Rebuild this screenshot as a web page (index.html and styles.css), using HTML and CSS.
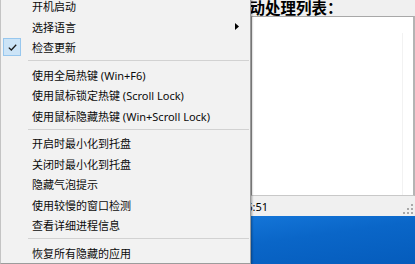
FILE: index.html
```html
<!DOCTYPE html>
<html lang="zh-CN">
<head>
<meta charset="utf-8">
<link rel="stylesheet" href="styles.css">
</head>
<body>
<div class="screen">
  <div class="window">
    <div class="win-head"><span class="label">自动处理列表：</span></div>
    <div class="listbox"><div class="col-line"></div></div>
    <div class="status">
      <span class="time">16:51</span>
      <svg class="grip" width="10" height="10" viewBox="0 0 10 10">
        <rect x="8" y="0" width="2" height="2" fill="#a8a8a8"/>
        <rect x="4" y="4" width="2" height="2" fill="#a8a8a8"/>
        <rect x="8" y="4" width="2" height="2" fill="#a8a8a8"/>
        <rect x="0" y="8" width="2" height="2" fill="#a8a8a8"/>
        <rect x="4" y="8" width="2" height="2" fill="#a8a8a8"/>
        <rect x="8" y="8" width="2" height="2" fill="#a8a8a8"/>
      </svg>
    </div>
  </div>
  <div class="desktop"></div>

  <div class="menu">
    <div class="item"><span class="gutter"></span><span class="text">开机启动</span></div>
    <div class="item"><span class="gutter"></span><span class="text">选择语言</span>
      <svg class="arrow" width="4" height="7" viewBox="0 0 4 7"><path d="M0 0 L4 3.5 L0 7 Z" fill="#000"/></svg>
    </div>
    <div class="item"><span class="gutter checked">
      <svg width="9" height="7" viewBox="0 0 9 7"><path d="M0.8 3.6 L3.3 6 L8.2 0.8" fill="none" stroke="#1a1a1a" stroke-width="1.3"/></svg>
    </span><span class="text">检查更新</span></div>
    <div class="sep"></div>
    <div class="item"><span class="gutter"></span><span class="text">使用全局热键 (Win+F6)</span></div>
    <div class="item"><span class="gutter"></span><span class="text">使用鼠标锁定热键 (Scroll Lock)</span></div>
    <div class="item"><span class="gutter"></span><span class="text">使用鼠标隐藏热键 (Win+Scroll Lock)</span></div>
    <div class="sep"></div>
    <div class="item"><span class="gutter"></span><span class="text">开启时最小化到托盘</span></div>
    <div class="item"><span class="gutter"></span><span class="text">关闭时最小化到托盘</span></div>
    <div class="item"><span class="gutter"></span><span class="text">隐藏气泡提示</span></div>
    <div class="item"><span class="gutter"></span><span class="text">使用较慢的窗口检测</span></div>
    <div class="item"><span class="gutter"></span><span class="text">查看详细进程信息</span></div>
    <div class="sep"></div>
    <div class="item"><span class="gutter"></span><span class="text">恢复所有隐藏的应用</span></div>
  </div>
</div>
</body>
</html>
```
FILE: styles.css
```css
html, body {
  margin: 0;
  padding: 0;
}
body {
  width: 415px;
  height: 264px;
  overflow: hidden;
  font-family: "Noto Sans", "Noto Sans CJK SC", sans-serif;
}
.screen {
  position: relative;
  width: 415px;
  height: 264px;
  overflow: hidden;
  display: flex;
  flex-direction: column;
}
.window {
  height: 216px;
  background: #f0f0f0;
  display: flex;
  flex-direction: column;
  padding-left: 250px;
  box-sizing: border-box;
}
.win-head {
  height: 16px;
}
.label {
  display: block;
  margin-left: -16px;
  font-family: "Noto Sans CJK SC", sans-serif;
  font-weight: 700;
  font-size: 15.5px;
  line-height: 14px;
  color: #000;
  white-space: nowrap;
}
.listbox {
  height: 180px;
  background: #fff;
  border-left: 2px solid #9a9a9a;
  border-top: 1px solid #a8a8a8;
  border-right: 2px solid #b4b4b4;
  border-bottom: 1px solid #c8c8c8;
  width: 165px;
  box-sizing: border-box;
  display: flex;
  justify-content: flex-end;
  padding-top: 16px;
}
.col-line {
  width: 1px;
  background: #f2f2f2;
  margin-right: 10px;
}
.status {
  flex: 1;
  display: flex;
  align-items: center;
  font-size: 11px;
  color: #000;
}
.time {
  margin-left: -10px;
}
.grip {
  margin-left: auto;
  margin-right: 2px;
  margin-top: 6px;
}
.desktop {
  flex: 1;
  background: linear-gradient(172deg, #2b8be4 0%, #1577da 30%, #0a66c8 60%, #055cbc 100%);
}
.menu {
  position: absolute;
  left: 0;
  top: -8px;
  width: 251px;
  box-sizing: border-box;
  padding: 2.75px 0 0;
  background: #f2f2f2;
  border: 1px solid #c4c4c4;
  border-right-color: #9c9c9c;
  border-bottom-color: #9c9c9c;
  box-shadow: 1px 1px 2px rgba(0, 0, 0, 0.35);
  font-size: 11px;
  color: #0a0a0a;
}
.item {
  height: 20.5px;
  display: flex;
  align-items: center;
  padding-left: 2px;
  white-space: nowrap;
}
.gutter {
  width: 18px;
  height: 18px;
  box-sizing: border-box;
  display: flex;
  align-items: center;
  justify-content: center;
  margin-right: 11px;
}
.gutter.checked {
  background: #cce4f7;
  border: 1px solid #97c7ee;
}
.arrow {
  margin-left: auto;
  margin-right: 11px;
}
.sep {
  height: 7px;
  display: flex;
  align-items: center;
  padding-left: 27px;
  padding-right: 1px;
}
.sep::after {
  content: "";
  flex: 1;
  height: 1px;
  background: #d2d2d2;
}
```
